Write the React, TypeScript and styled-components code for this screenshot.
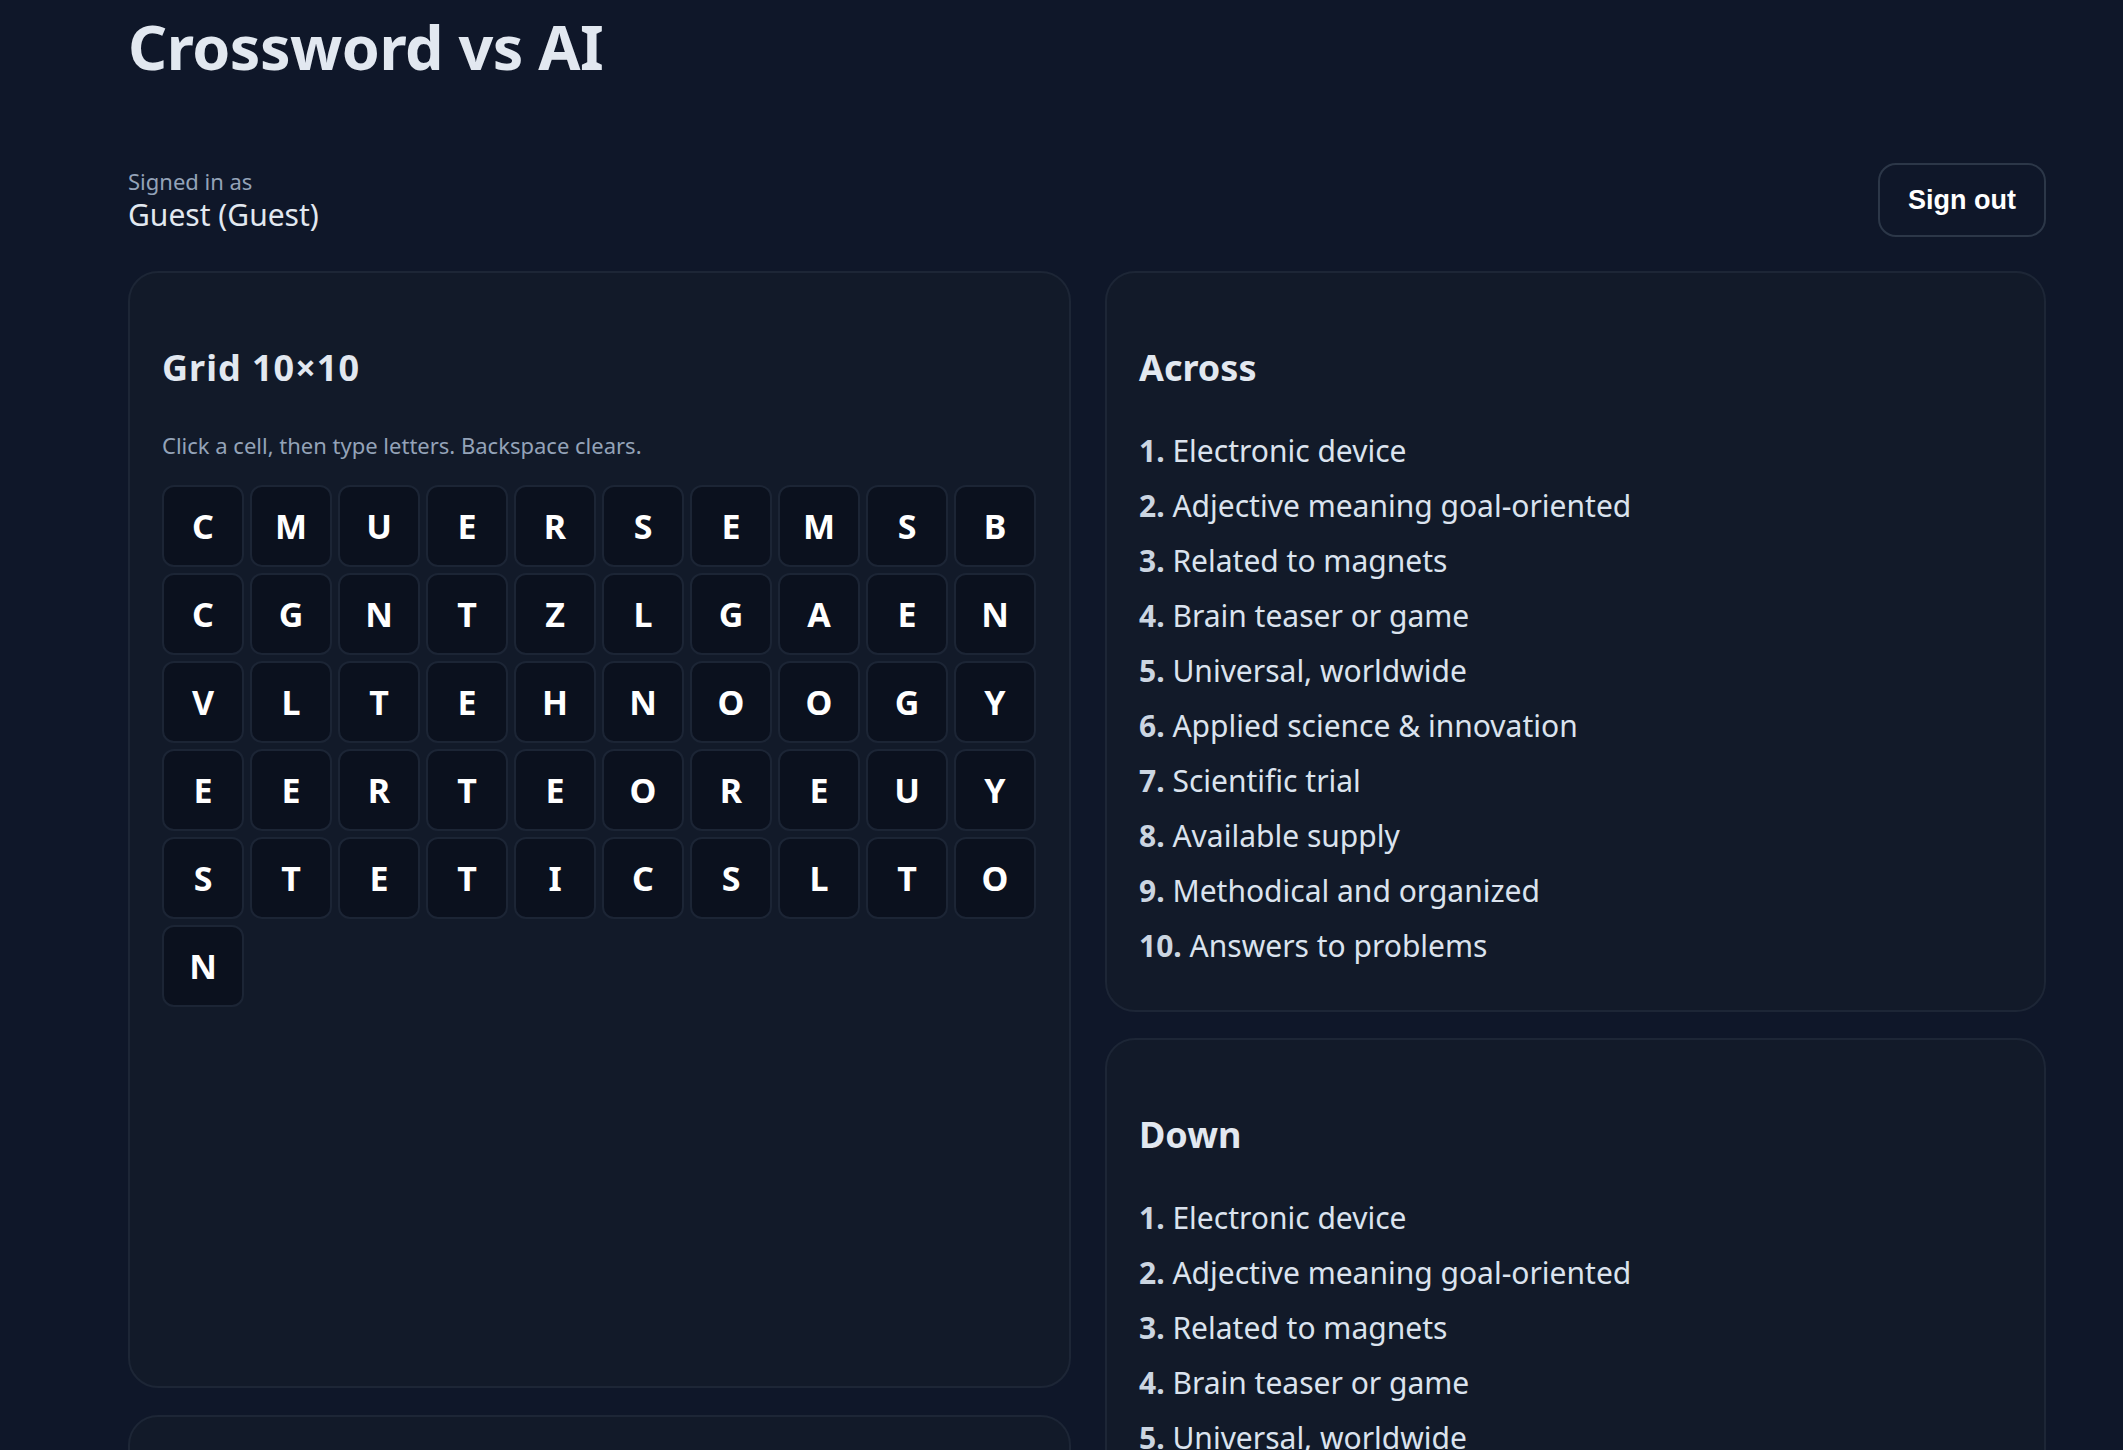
import React from "react";
import styled, { createGlobalStyle } from "styled-components";

const Global = createGlobalStyle`
  html, body { margin: 0; padding: 0; background: #0f1729; }
  body { font-family: "Noto Sans", "Open Sans", sans-serif; color: #e2e8f0; }
  * { box-sizing: border-box; }
`;

const Page = styled.div`
  width: 1918px;
  margin-left: 128px;
  padding-top: 9px;
`;

const Title = styled.h1`
  margin: 0;
  font-size: 61px;
  line-height: 76px;
  font-weight: 700;
  color: #e2e8f0;
  letter-spacing: -0.5px;
`;

const UserBar = styled.div`
  margin-top: 78px;
  display: flex;
  align-items: center;
  justify-content: space-between;
`;

const UserInfo = styled.div`
  display: flex;
  flex-direction: column;
  gap: 3px;
`;

const Muted = styled.div`
  font-size: 22px;
  line-height: 26px;
  color: #94a3b8;
`;

const UserName = styled.div`
  font-size: 30px;
  line-height: 36px;
  color: #e2e8f0;
`;

const SignOut = styled.button`
  height: 74px;
  padding: 0 28px;
  border: 2px solid #2c3748;
  border-radius: 18px;
  background: transparent;
  color: #ffffff;
  font-family: "Liberation Sans", Arial, sans-serif;
  font-weight: 700;
  font-size: 27px;
  cursor: pointer;
`;

const Columns = styled.div`
  margin-top: 34px;
  display: grid;
  grid-template-columns: 943px 941px;
  column-gap: 34px;
  align-items: start;
`;

const Stack = styled.div<{ $gap: number }>`
  display: flex;
  flex-direction: column;
  gap: ${(p) => p.$gap}px;
`;

const Card = styled.section<{ $minH?: number }>`
  background: #121a29;
  border: 2px solid #1d2636;
  border-radius: 30px;
  padding: 32px 32px 37px;
  min-height: ${(p) => (p.$minH ? `${p.$minH}px` : "auto")};
`;

const CardTitle = styled.h2<{ $spacing?: number }>`
  margin: 43px 0 0;
  font-size: 36px;
  line-height: 40px;
  font-weight: 700;
  color: #e2e8f0;
  letter-spacing: ${(p) => p.$spacing ?? 0}px;
`;

const Hint = styled.p`
  margin: 43px 0 0;
  font-size: 22px;
  line-height: 28px;
  color: #94a3b8;
`;

const Board = styled.div`
  margin-top: 26px;
  display: grid;
  grid-template-columns: repeat(10, 82px);
  grid-auto-rows: 82px;
  gap: 6px;
`;

const Cell = styled.div`
  display: flex;
  align-items: center;
  justify-content: center;
  background: #0b111e;
  border: 2px solid #1c2535;
  border-radius: 12px;
  font-size: 34px;
  font-weight: 700;
  color: #ffffff;
`;

const ClueList = styled.ol`
  list-style: none;
  margin: 35px 0 0;
  padding: 0;
`;

const Clue = styled.li`
  font-size: 30px;
  line-height: 55px;
  color: #dbe3ee;
  white-space: nowrap;
`;

const ClueNum = styled.b`
  font-weight: 700;
  color: #cbd5e1;
`;

const rows = [
  "CMUERSEMSB",
  "CGNTZLGAEN",
  "VLTEHNOOGY",
  "EERTEOREUY",
  "STETICSLTO",
  "N",
];

const clues = [
  "Electronic device",
  "Adjective meaning goal-oriented",
  "Related to magnets",
  "Brain teaser or game",
  "Universal, worldwide",
  "Applied science & innovation",
  "Scientific trial",
  "Available supply",
  "Methodical and organized",
  "Answers to problems",
];

function Clues({ title }: { title: string }) {
  return (
    <Card>
      <CardTitle>{title}</CardTitle>
      <ClueList>
        {clues.map((c, i) => (
          <Clue key={i}>
            <ClueNum>{i + 1}.</ClueNum> {c}
          </Clue>
        ))}
      </ClueList>
    </Card>
  );
}

export default function App() {
  const letters = rows.join("").split("");
  return (
    <>
      <Global />
      <Page>
        <Title>Crossword vs AI</Title>
        <UserBar>
          <UserInfo>
            <Muted>Signed in as</Muted>
            <UserName>Guest (Guest)</UserName>
          </UserInfo>
          <SignOut>Sign out</SignOut>
        </UserBar>
        <Columns>
          <Stack $gap={27}>
            <Card $minH={1117}>
              <CardTitle $spacing={1}>Grid 10×10</CardTitle>
              <Hint>Click a cell, then type letters. Backspace clears.</Hint>
              <Board>
                {letters.map((l, i) => (
                  <Cell key={i}>{l}</Cell>
                ))}
              </Board>
            </Card>
            <Card $minH={500} />
          </Stack>
          <Stack $gap={26}>
            <Clues title="Across" />
            <Clues title="Down" />
          </Stack>
        </Columns>
      </Page>
    </>
  );
}
